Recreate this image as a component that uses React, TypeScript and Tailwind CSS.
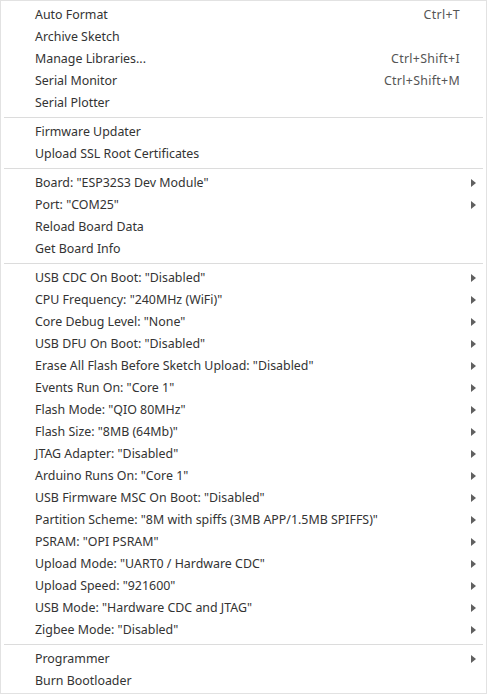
import React from "react";

type Item = { label: string; shortcut?: string; sub?: boolean };

const groups: Item[][] = [
  [
    { label: "Auto Format", shortcut: "Ctrl+T" },
    { label: "Archive Sketch" },
    { label: "Manage Libraries...", shortcut: "Ctrl+Shift+I" },
    { label: "Serial Monitor", shortcut: "Ctrl+Shift+M" },
    { label: "Serial Plotter" },
  ],
  [{ label: "Firmware Updater" }, { label: "Upload SSL Root Certificates" }],
  [
    { label: 'Board: "ESP32S3 Dev Module"', sub: true },
    { label: 'Port: "COM25"', sub: true },
    { label: "Reload Board Data" },
    { label: "Get Board Info" },
  ],
  [
    { label: 'USB CDC On Boot: "Disabled"', sub: true },
    { label: 'CPU Frequency: "240MHz (WiFi)"', sub: true },
    { label: 'Core Debug Level: "None"', sub: true },
    { label: 'USB DFU On Boot: "Disabled"', sub: true },
    { label: 'Erase All Flash Before Sketch Upload: "Disabled"', sub: true },
    { label: 'Events Run On: "Core 1"', sub: true },
    { label: 'Flash Mode: "QIO 80MHz"', sub: true },
    { label: 'Flash Size: "8MB (64Mb)"', sub: true },
    { label: 'JTAG Adapter: "Disabled"', sub: true },
    { label: 'Arduino Runs On: "Core 1"', sub: true },
    { label: 'USB Firmware MSC On Boot: "Disabled"', sub: true },
    { label: 'Partition Scheme: "8M with spiffs (3MB APP/1.5MB SPIFFS)"', sub: true },
    { label: 'PSRAM: "OPI PSRAM"', sub: true },
    { label: 'Upload Mode: "UART0 / Hardware CDC"', sub: true },
    { label: 'Upload Speed: "921600"', sub: true },
    { label: 'USB Mode: "Hardware CDC and JTAG"', sub: true },
    { label: 'Zigbee Mode: "Disabled"', sub: true },
  ],
  [{ label: "Programmer", sub: true }, { label: "Burn Bootloader" }],
];

function Arrow() {
  return (
    <svg width="5" height="8" viewBox="0 0 5 8" className="block">
      <path d="M0 0 L5 4 L0 8 Z" fill="#606060" />
    </svg>
  );
}

function Row({ item }: { item: Item }) {
  return (
    <div className="flex h-[22px] items-center pl-[34px] pr-[10px]">
      <span className="flex-1 whitespace-nowrap">{item.label}</span>
      {item.shortcut && <span className="tracking-[0.3px] text-[#555]">{item.shortcut}</span>}
      <span className="flex w-[16px] justify-end">{item.sub && <Arrow />}</span>
    </div>
  );
}

export default function App() {
  return (
    <div
      className="box-border h-[694px] w-[487px] border border-[#e2e2e2] bg-white pt-[3px] text-[12.4px] text-[#333]"
      style={{ fontFamily: '"Noto Sans", "Open Sans", sans-serif' }}
    >
      {groups.map((g, gi) => (
        <div key={gi}>
          {gi > 0 && (
            <div className="flex h-[7px] items-center px-[3px]">
              <div className="h-px w-full bg-[#dcdcdc]" />
            </div>
          )}
          {g.map((it, i) => (
            <Row key={i} item={it} />
          ))}
        </div>
      ))}
    </div>
  );
}
